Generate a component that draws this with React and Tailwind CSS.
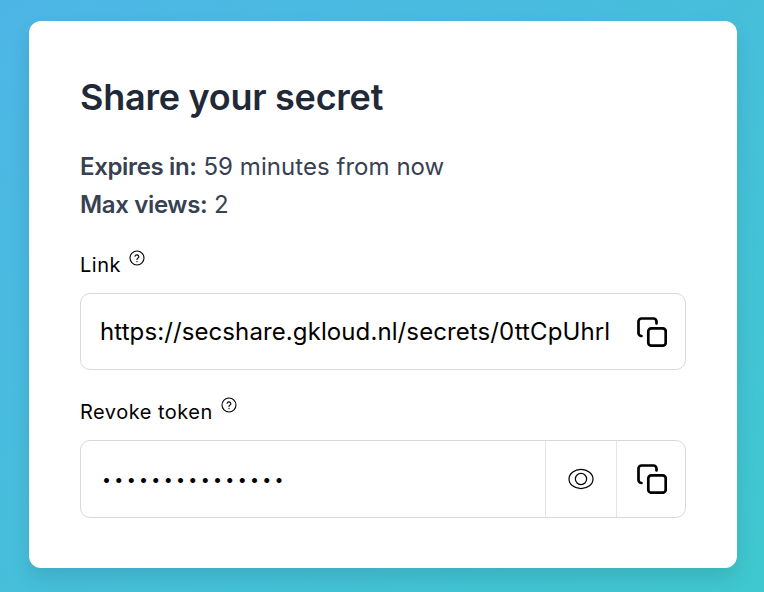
function HelpIcon() {
  return (
    <svg width="16" height="16" viewBox="0 0 16 16" fill="none" stroke="currentColor" strokeWidth="1.1" strokeLinecap="round" className="mb-[14px] shrink-0">
      <circle cx="8" cy="8" r="7" />
      <path d="M6 6.3a2 2 0 0 1 3.9.4c0 1.3-1.9 1.5-1.9 2.7" />
      <path d="M8 11.4v.3" />
    </svg>
  );
}

function CopyIcon() {
  return (
    <svg width="30" height="30" viewBox="0 0 30 30" fill="none" stroke="currentColor" strokeWidth="2.7" strokeLinecap="round" strokeLinejoin="round" className="shrink-0 text-black">
      <rect x="11.3" y="11.3" width="17.4" height="17.4" rx="3" />
      <path d="M19.5 6.5V4.5a3 3 0 0 0-3-3H4.5a3 3 0 0 0-3 3v11.5a3 3 0 0 0 3 3" />
    </svg>
  );
}

function EyeIcon() {
  return (
    <svg width="26" height="22" viewBox="0 0 26 22" fill="none" stroke="currentColor" strokeWidth="1.2" className="shrink-0 text-black">
      <ellipse cx="13" cy="11" rx="12" ry="9.6" />
      <circle cx="13" cy="11" r="5.6" />
    </svg>
  );
}

function Label({ children }) {
  return (
    <div className="flex items-center gap-[8px] h-[24px] text-[20px] tracking-[0.5px] text-black">
      <span>{children}</span>
      <HelpIcon />
    </div>
  );
}

export default function App() {
  return (
    <div className="w-[764px] h-[592px] overflow-hidden bg-gradient-to-br from-[#4db5e6] to-[#3fc8cf] pt-[21px] pl-[29px] font-['Inter',sans-serif]">
      <div className="w-[708px] h-[547px] bg-white rounded-[12px] shadow-[0_10px_20px_rgba(0,0,0,0.1)] pt-[54px] px-[51px]">
        <h1 className="h-[44px] leading-[44px] text-[36px] font-semibold tracking-[-0.25px] text-[#1f2937]">Share your secret</h1>

        <div className="mt-[29px] text-[24px] leading-[38px] tracking-[0.05px] text-[#374151]">
          <p><span className="font-semibold tracking-[-0.35px]">Expires in:</span> 59 minutes from now</p>
          <p><span className="font-semibold tracking-[-0.35px]">Max views:</span> 2</p>
        </div>

        <div className="mt-[29px]">
          <Label>Link</Label>
          <div className="mt-[16px] flex items-center h-[77px] border border-[#d9d9d9] rounded-[10px] pl-[19px] pr-[18px]">
            <span className="flex-1 text-[24px] tracking-[0.1px] text-black whitespace-nowrap overflow-hidden">https://secshare.gkloud.nl/secrets/0ttCpUhrl</span>
            <CopyIcon />
          </div>
        </div>

        <div className="mt-[30px]">
          <Label>Revoke token</Label>
          <div className="mt-[16px] flex items-stretch h-[78px] border border-[#d9d9d9] rounded-[10px]">
            <div className="flex-1 flex items-center pl-[21px] text-[16px] text-black tracking-[3.33px]">•••••••••••••••</div>
            <div className="w-[71px] flex items-center justify-center border-l border-[#e5e5e5]">
              <EyeIcon />
            </div>
            <div className="w-[69px] flex items-center justify-center border-l border-[#e5e5e5] pl-[2px]">
              <CopyIcon />
            </div>
          </div>
        </div>
      </div>
    </div>
  );
}
